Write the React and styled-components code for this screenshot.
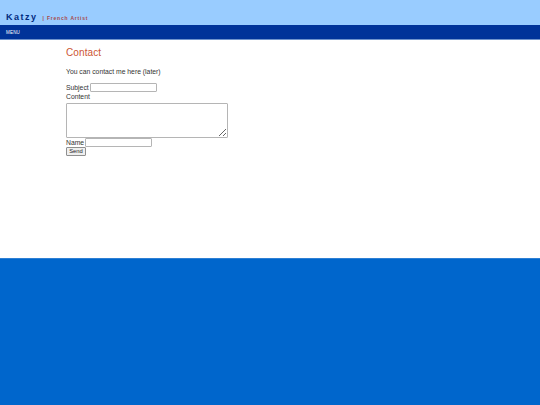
import React from 'react'
import styled, { createGlobalStyle } from 'styled-components'

const GlobalStyle = createGlobalStyle`
  html, body {
    margin: 0;
    padding: 0;
    height: 100%;
    background-color: #0066CC;
  }

  body {
    font-family: 'Liberation Sans', Arial, sans-serif;
    font-size: 6.8px;
    color: #333333;
  }
`

const Header = styled.header`
  height: 25px;
  box-sizing: border-box;
  padding: 12px 0 0 6px;
  background-color: #99CCFF;
  display: flex;
  align-items: baseline;
  gap: 5px;
`

const Logo = styled.span`
  font-size: 9px;
  font-weight: bold;
  letter-spacing: 1.5px;
  color: #002A80;
  line-height: 10px;
`

const Tagline = styled.span`
  font-size: 5px;
  font-weight: bold;
  letter-spacing: 0.8px;
  color: #A84848;
`

const MenuBar = styled.nav`
  height: 15px;
  box-sizing: border-box;
  padding-left: 6px;
  background-color: #003399;
  border-bottom: 1px solid #6F93CC;
  display: flex;
  align-items: center;
`

const MenuItem = styled.span`
  font-size: 4.5px;
  color: #FFFFFF;
  letter-spacing: 0.2px;
`

const Main = styled.main`
  height: 219px;
  box-sizing: border-box;
  padding: 7px 0 0 66px;
  background-color: #FFFFFF;
  border-bottom: 1px solid #2D7FD4;
`

const Title = styled.h2`
  margin: 0;
  font-size: 10px;
  line-height: 12px;
  font-weight: normal;
  letter-spacing: 0.1px;
  color: #CC5533;
`

const Intro = styled.p`
  margin: 9px 0 7px;
  line-height: 8px;
`

const Form = styled.form`
  display: flex;
  flex-direction: column;
  align-items: flex-start;
`

const Row = styled.div`
  display: flex;
  align-items: center;
  gap: ${props => props.gap || 1}px;
  height: 9px;
  margin-bottom: ${props => props.after || 0}px;
`

const Label = styled.label`
  line-height: 8px;
`

const TextInput = styled.input`
  width: 67px;
  height: 9px;
  box-sizing: border-box;
  margin: 0;
  padding: 0 2px;
  font-size: 6px;
  border: 1px solid #B5B5B5;
  border-radius: 1px;
  background: #FFFFFF;
`

const TextArea = styled.textarea`
  display: block;
  width: 162px;
  height: 35px;
  box-sizing: border-box;
  margin: 2px 0 0;
  padding: 1px;
  font-size: 6px;
  border: 1px solid #B5B5B5;
  border-radius: 1px;
`

const SendButton = styled.button`
  width: 20px;
  height: 9px;
  box-sizing: border-box;
  margin: 0;
  padding: 0;
  font-family: 'Liberation Sans', Arial, sans-serif;
  font-size: 5.8px;
  line-height: 7px;
  color: #222222;
  background: #EFEFEF;
  border: 1px solid #8F8F8F;
  border-radius: 1px;
`

const App = () => (
  <>
    <GlobalStyle />
    <Header>
      <Logo>Katzy</Logo>
      <Tagline>| French Artist</Tagline>
    </Header>
    <MenuBar>
      <MenuItem>MENU</MenuItem>
    </MenuBar>
    <Main>
      <Title>Contact</Title>
      <Intro>You can contact me here (later)</Intro>
      <Form onSubmit={e => e.preventDefault()}>
        <Row after={1}>
          <Label htmlFor="subject">Subject</Label>
          <TextInput id="subject" type="text" />
        </Row>
        <Label htmlFor="content">Content</Label>
        <TextArea id="content" />
        <Row>
          <Label htmlFor="name">Name</Label>
          <TextInput id="name" type="text" />
        </Row>
        <SendButton type="submit">Send</SendButton>
      </Form>
    </Main>
  </>
)

export default App
